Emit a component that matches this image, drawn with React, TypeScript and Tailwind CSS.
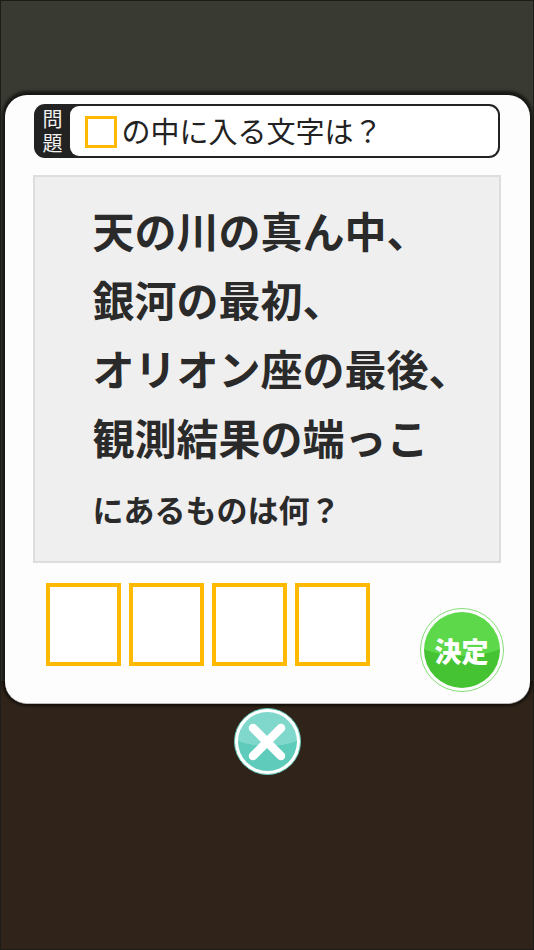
const cjk = "font-['Noto_Sans_CJK_JP','Noto_Sans',sans-serif]";

function CloseIcon() {
  return (
    <svg viewBox="0 0 40 40" className="h-[40px] w-[40px]">
      <path d="M6 6 L34 34 M34 6 L6 34" stroke="#ffffff" strokeWidth="8.5" strokeLinecap="round" fill="none" />
    </svg>
  );
}

export default function App() {
  const lines = ['天の川の真ん中、', '銀河の最初、', 'オリオン座の最後、', '観測結果の端っこ'];

  return (
    <div className={`${cjk} flex h-[950px] w-[534px] flex-col items-center overflow-hidden border border-[#1c1c18] bg-[linear-gradient(to_bottom,#393a32_0,#393a32_680px,#30241a_680px,#30241a_100%)] pt-[94px]`}>
      {/* Question dialog */}
      <div className="flex h-[609px] w-[525px] flex-col rounded-[22px] border-b border-[#bbbbbb] bg-[#fdfdfd] px-[29px] pt-[9px] shadow-[0_-1px_3px_3px_rgba(0,0,0,0.6)]">
        <div className="flex h-[54px] w-[466px] items-stretch rounded-[11px] bg-[#222222] p-[2px] pl-0">
          <div className="flex w-[36px] items-center justify-center pl-[2px]">
            <span className="w-[20px] break-all text-center text-[20px] leading-[24px] text-[#f2f2f2]">問題</span>
          </div>
          <div className="flex flex-1 items-center rounded-[9px] bg-white pl-[15px]">
            <div className="mt-[1px] h-[32px] w-[32px] border-[3px] border-[#ffb900]" />
            <span className="mb-[2px] ml-[5px] text-[29px] leading-none text-[#222222]">の中に入る文字は？</span>
          </div>
        </div>

        <div className="-ml-[1px] mt-[17px] flex h-[388px] w-[468px] flex-col border-2 border-[#dddddd] bg-[#efefef] pl-[58px] pt-[18px] text-[#2a2a2a]">
          {lines.map((line) => (
            <p key={line} className="h-[69px] text-[42px] font-bold leading-[69px]">
              {line}
            </p>
          ))}
          <p className="mt-[8px] text-[31px] font-bold leading-[60px]">にあるものは何？</p>
        </div>

        <div className="mt-[20px] flex items-start justify-between pl-[12px]">
          <div className="flex gap-[8px]">
            {[0, 1, 2, 3].map((i) => (
              <div key={i} className="h-[83px] w-[75px] border-4 border-[#ffb900] bg-white" />
            ))}
          </div>
          <button className="-mr-[3px] mt-[25px] flex h-[84px] w-[84px] items-center justify-center rounded-full border border-[#86dd78] bg-white p-[3px]">
            <span className="flex h-full w-full items-center justify-center rounded-full bg-[radial-gradient(ellipse_95%_58%_at_50%_0%,#5ed84b_99%,#46c332_100%)] text-[27px] font-black leading-none text-white">
              決定
            </span>
          </button>
        </div>
      </div>

      <button className="mt-[4px] flex h-[67px] w-[67px] items-center justify-center rounded-full border border-[#5fc8b8] bg-white p-[3px]">
        <span className="flex h-full w-full items-center justify-center rounded-full bg-[radial-gradient(ellipse_95%_58%_at_50%_0%,#80d8cc_99%,#5ecbbb_100%)]">
          <CloseIcon />
        </span>
      </button>
    </div>
  );
}
